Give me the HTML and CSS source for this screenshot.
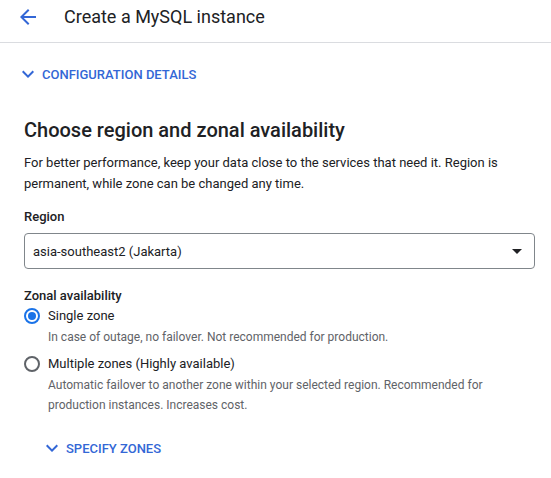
FILE: index.html
```html
<!DOCTYPE html>
<html>
<head>
<meta charset="utf-8">
<link rel="stylesheet" href="styles.css">
</head>
<body>
<header class="topbar">
  <svg class="back" width="24" height="24" viewBox="0 0 24 24"><path d="M20 11H7.83l5.59-5.59L12 4l-8 8 8 8 1.41-1.41L7.83 13H20v-2z" fill="#3367d6"/></svg>
  <h1 class="title">Create a MySQL instance</h1>
</header>
<main class="content">
  <button class="toggle toggle-config">
    <svg width="24" height="24" viewBox="0 0 24 24"><path d="M7.41 8.59L12 13.17l4.59-4.58L18 10l-6 6-6-6 1.41-1.41z" fill="#3367d6"/></svg>
    <span>Configuration details</span>
  </button>
  <h2 class="heading">Choose region and zonal availability</h2>
  <p class="intro">For better performance, keep your data close to the services that need it. Region is permanent, while zone can be changed any time.</p>
  <div class="label">Region</div>
  <div class="select">
    <span>asia-southeast2 (Jakarta)</span>
    <svg width="24" height="24" viewBox="0 0 24 24"><path d="M7 10l5 5 5-5z" fill="#202124"/></svg>
  </div>
  <div class="label label-zonal">Zonal availability</div>
  <div class="radio-row first">
    <span class="radio checked"></span>
    <div class="radio-text">
      <div class="radio-title">Single zone</div>
      <div class="radio-desc">In case of outage, no failover. Not recommended for production.</div>
    </div>
  </div>
  <div class="radio-row">
    <span class="radio"></span>
    <div class="radio-text">
      <div class="radio-title">Multiple zones (Highly available)</div>
      <div class="radio-desc">Automatic failover to another zone within your selected region. Recommended for production instances. Increases cost.</div>
    </div>
  </div>
  <button class="toggle toggle-zones">
    <svg width="24" height="24" viewBox="0 0 24 24"><path d="M7.41 8.59L12 13.17l4.59-4.58L18 10l-6 6-6-6 1.41-1.41z" fill="#3367d6"/></svg>
    <span>Specify zones</span>
  </button>
</main>
</body>
</html>
```

FILE: styles.css
```css
* { box-sizing: border-box; }
html, body { margin: 0; padding: 0; background: #fff; }
body {
  font-family: Roboto, "Liberation Sans", Arial, sans-serif;
  color: #202124;
  width: 551px;
}
.topbar {
  display: flex;
  align-items: center;
  height: 43px;
  padding: 0 0 8px 16px;
  border-bottom: 1px solid #dadce0;
}
.back { display: block; }
.title {
  margin: 0 0 0 24px;
  font-size: 18px;
  line-height: 24px;
  font-weight: 400;
  color: #202124;
}
.content {
  padding: 0 16px 0 24px;
}
.toggle {
  display: flex;
  align-items: center;
  gap: 2px;
  background: none;
  border: 0;
  padding: 0;
  font-family: inherit;
  font-size: 13px;
  font-weight: 500;
  text-transform: uppercase;
  color: #3367d6;
}
.toggle svg { display: block; margin-left: -8px; }
.toggle-config { margin-top: 19px; }
.heading {
  margin: 30px 0 0;
  font-size: 20px;
  font-weight: 500;
  line-height: 28px;
}
.intro {
  margin: 8px 0 0;
  font-size: 13px;
  line-height: 21px;
}
.label {
  margin-top: 13px;
  font-size: 13px;
  font-weight: 500;
  line-height: 20px;
}
.select {
  margin-top: 6px;
  height: 36px;
  border: 1px solid #80868b;
  border-radius: 4px;
  display: flex;
  align-items: center;
  justify-content: space-between;
  padding: 0 5px 0 8px;
  font-size: 13px;
}
.label-zonal { margin-top: 17px; }
.radio-row {
  display: flex;
  align-items: flex-start;
  gap: 8px;
  margin-top: 7px;
}
.radio-row.first { margin-top: 0; }
.radio {
  flex: none;
  width: 16px;
  height: 16px;
  border: 2px solid #5f6368;
  border-radius: 50%;
  margin-top: 2px;
  position: relative;
}
.radio.checked { border-color: #1a73e8; }
.radio.checked::after {
  content: "";
  position: absolute;
  left: 2px; top: 2px;
  width: 8px; height: 8px;
  border-radius: 50%;
  background: #1a73e8;
}
.radio-title { font-size: 13px; line-height: 20px; }
.radio-desc { font-size: 12px; line-height: 20px; color: #5f6368; margin-top: 1px; }
.toggle-zones { margin: 21px 0 0 24px; }
```
